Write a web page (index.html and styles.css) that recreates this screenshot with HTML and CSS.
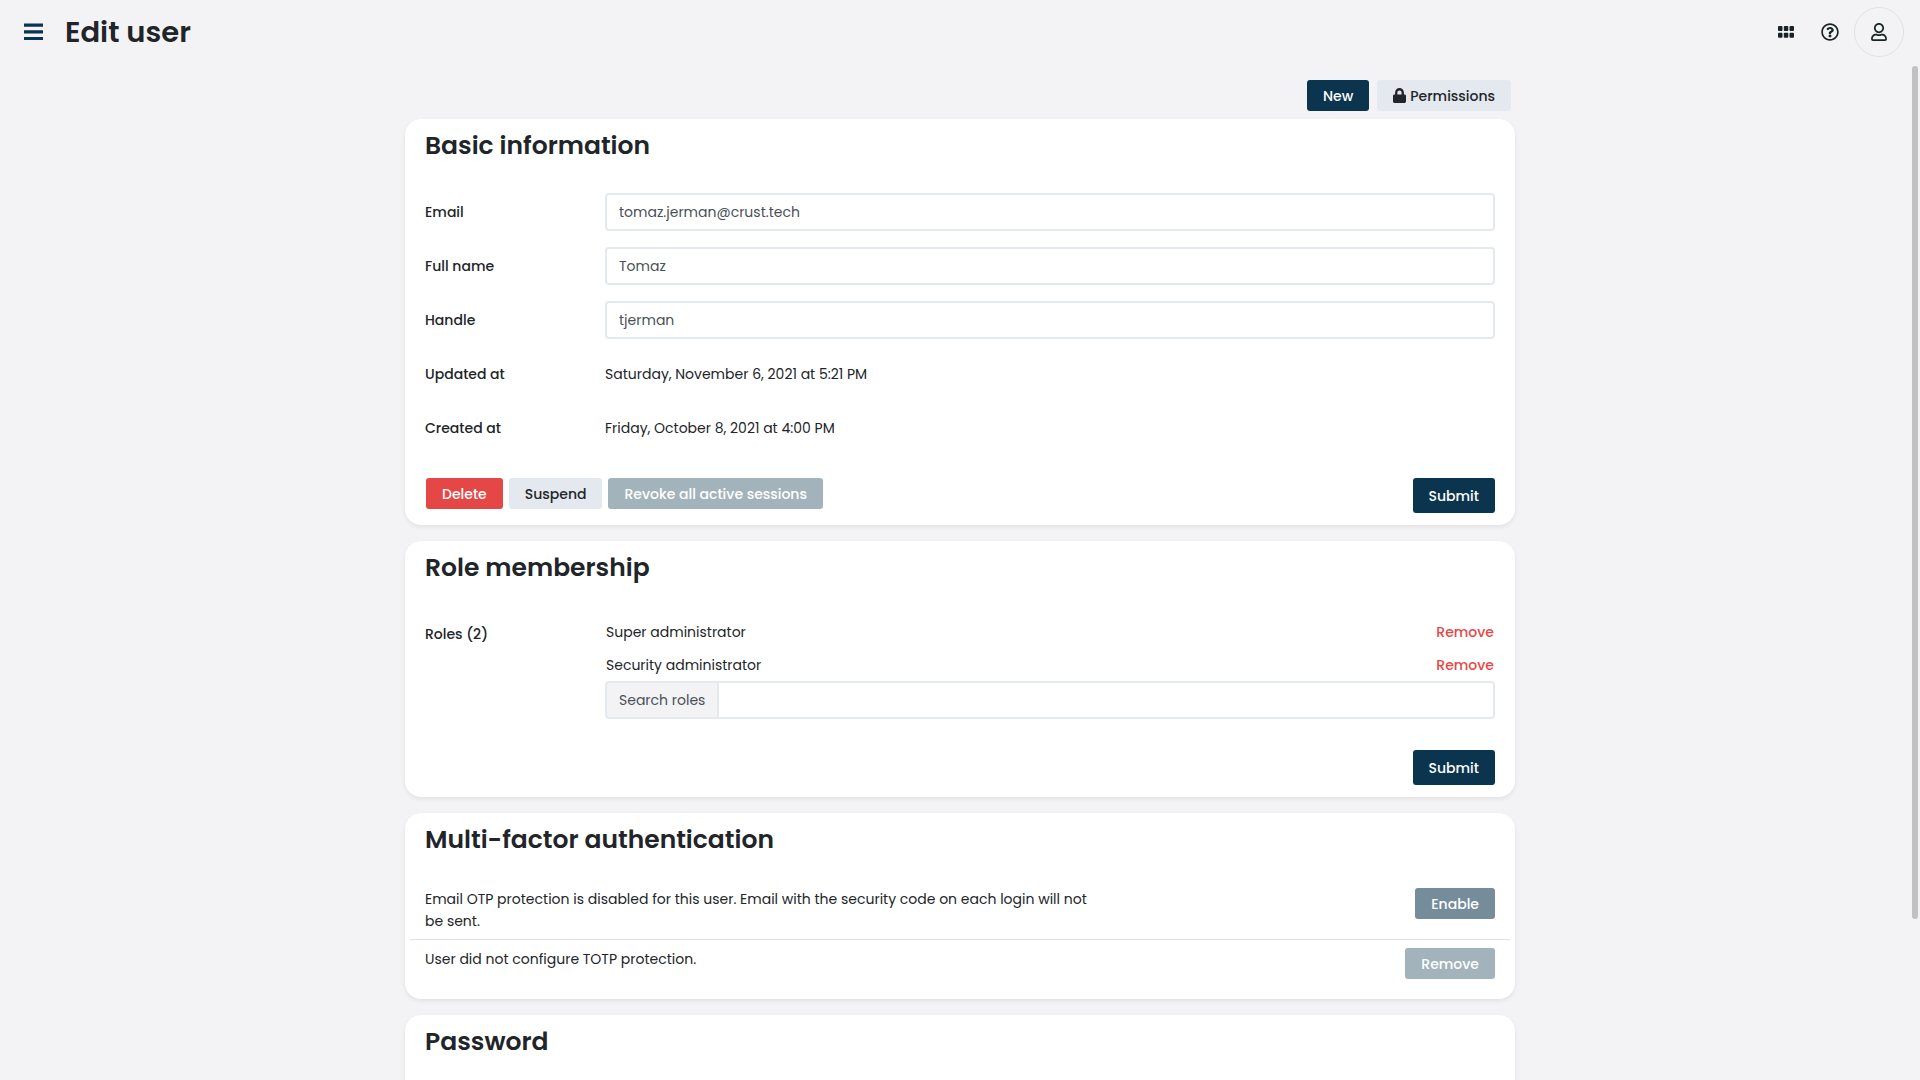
FILE: index.html
```html
<!DOCTYPE html>
<html lang="en">
<head>
<meta charset="utf-8">
<meta name="viewport" content="width=device-width, initial-scale=1">
<title>Edit user</title>
<link rel="stylesheet" href="styles.css">
</head>
<body>
<header class="topbar">
  <button class="icon-button" type="button" aria-label="Menu">
    <svg class="icon-menu" viewBox="0 0 19 18" aria-hidden="true"><path d="M0 .5h19v3.2H0zM0 7.2h19v3.2H0zM0 14h19v3H0z"/></svg>
  </button>
  <h1 class="page-title">Edit user</h1>
  <nav class="tools" aria-label="Tools">
    <button class="icon-button" type="button" aria-label="Applications">
      <svg class="icon-apps" viewBox="0 0 16 12" aria-hidden="true"><rect width="4.5" height="5" rx="1"/><rect x="5.8" width="4.5" height="5" rx="1"/><rect x="11.5" width="4.5" height="5" rx="1"/><rect y="6.8" width="4.5" height="5" rx="1"/><rect x="5.8" y="6.8" width="4.5" height="5" rx="1"/><rect x="11.5" y="6.8" width="4.5" height="5" rx="1"/></svg>
    </button>
    <button class="icon-button" type="button" aria-label="Help">
      <svg class="icon-help" viewBox="0 0 512 512" aria-hidden="true"><path d="M256 8C119.043 8 8 119.083 8 256c0 136.997 111.043 248 248 248s248-111.003 248-248C504 119.083 392.957 8 256 8zm0 448c-110.532 0-200-89.431-200-200 0-110.495 89.472-200 200-200 110.491 0 200 89.471 200 200 0 110.53-89.431 200-200 200zm107.244-255.2c0 67.052-72.421 68.084-72.421 92.863V300c0 6.627-5.373 12-12 12h-45.647c-6.627 0-12-5.373-12-12v-8.659c0-35.745 27.1-50.034 47.579-61.516 17.561-9.845 28.324-16.541 28.324-29.579 0-17.246-21.999-28.693-39.784-28.693-23.189 0-33.894 10.977-48.942 29.969-4.057 5.12-11.46 6.071-16.666 2.124l-27.824-21.098c-5.107-3.872-6.251-11.066-2.644-16.363C184.846 131.491 214.94 112 261.794 112c49.071 0 101.45 38.304 101.45 88.8zM298 368c0 23.159-18.841 42-42 42s-42-18.841-42-42 18.841-42 42-42 42 18.841 42 42z"/></svg>
    </button>
    <button class="icon-button avatar" type="button" aria-label="Profile">
      <svg class="icon-user" viewBox="0 0 448 512" aria-hidden="true"><path d="M313.6 304c-28.7 0-42.5 16-89.6 16-47.1 0-60.8-16-89.6-16C60.2 304 0 364.2 0 438.4V464c0 26.5 21.5 48 48 48h352c26.5 0 48-21.5 48-48v-25.6c0-74.2-60.2-134.4-134.4-134.4zM400 464H48v-25.6c0-47.6 38.8-86.4 86.4-86.4 14.6 0 38.3 16 89.6 16 51.7 0 74.9-16 89.6-16 47.6 0 86.4 38.8 86.4 86.4V464zM224 288c79.5 0 144-64.5 144-144S303.5 0 224 0 80 64.5 80 144s64.5 144 144 144zm0-240c52.9 0 96 43.1 96 96s-43.1 96-96 96-96-43.1-96-96 43.1-96 96-96z"/></svg>
    </button>
  </nav>
</header>
<main class="content">
  <div class="container">
    <div class="actions">
      <button class="btn primary" type="button">New</button>
      <button class="btn light" type="button"><svg class="icon-lock" viewBox="0 0 448 512" aria-hidden="true"><path d="M400 224h-24v-72C376 68.2 307.8 0 224 0S72 68.2 72 152v72H48c-26.5 0-48 21.5-48 48v192c0 26.5 21.5 48 48 48h352c26.5 0 48-21.5 48-48V272c0-26.5-21.5-48-48-48zm-104 0H152v-72c0-39.7 32.3-72 72-72s72 32.3 72 72v72z"/></svg>Permissions</button>
    </div>

    <section class="card">
      <h2 class="card-title">Basic information</h2>
      <form class="fields">
        <div class="field"><label class="label" for="email">Email</label><input class="input" id="email" type="email" value="tomaz.jerman@crust.tech"></div>
        <div class="field"><label class="label" for="name">Full name</label><input class="input" id="name" type="text" value="Tomaz"></div>
        <div class="field"><label class="label" for="handle">Handle</label><input class="input" id="handle" type="text" value="tjerman"></div>
        <div class="field"><span class="label">Updated at</span><span>Saturday, November 6, 2021 at 5:21 PM</span></div>
        <div class="field"><span class="label">Created at</span><span>Friday, October 8, 2021 at 4:00 PM</span></div>
      </form>
      <div class="card-footer">
        <div class="button-group">
          <button class="btn danger" type="button">Delete</button>
          <button class="btn light" type="button">Suspend</button>
          <button class="btn secondary" type="button" disabled>Revoke all active sessions</button>
        </div>
        <button class="btn primary submit" type="button">Submit</button>
      </div>
    </section>

    <section class="card">
      <h2 class="card-title">Role membership</h2>
      <div class="field roles">
        <label class="label" for="roles">Roles (2)</label>
        <div>
          <ul class="role-list">
            <li class="role"><span>Super administrator</span><button class="remove" type="button">Remove</button></li>
            <li class="role"><span>Security administrator</span><button class="remove" type="button">Remove</button></li>
          </ul>
          <div class="search"><span class="search-label">Search roles</span><input class="input search-input" id="roles" type="text"></div>
        </div>
      </div>
      <div class="card-footer">
        <button class="btn primary submit" type="button">Submit</button>
      </div>
    </section>

    <section class="card mfa">
      <h2 class="card-title">Multi-factor authentication</h2>
      <div class="mfa-row">
        <p class="mfa-text">Email OTP protection is disabled for this user. Email with the security code on each login will not be sent.</p>
        <button class="btn secondary" type="button">Enable</button>
      </div>
      <div class="mfa-row">
        <p class="mfa-text">User did not configure TOTP protection.</p>
        <button class="btn secondary" type="button" disabled>Remove</button>
      </div>
    </section>

    <section class="card">
      <h2 class="card-title">Password</h2>
      <form class="fields">
        <input class="input" type="password" aria-label="Password">
      </form>
    </section>
  </div>
</main>
<div class="scroll-thumb" aria-hidden="true"></div>
</body>
</html>
```
FILE: styles.css
```css
* { box-sizing: border-box; }

body {
  margin: 0;
  height: 100vh;
  display: flex;
  flex-direction: column;
  overflow: hidden;
  position: relative;
  background: #f3f3f5;
  color: #212529;
  font: 400 14px/22px Poppins, Inter, "Open Sans", sans-serif;
}

button, input { font: inherit; color: inherit; }
button { cursor: pointer; }

.topbar {
  flex: none;
  display: flex;
  align-items: center;
  height: 64px;
  padding: 0 16px 0 24px;
}

.page-title { margin: 0 0 0 22px; font-size: 29px; line-height: 40px; font-weight: 600; }
.tools { display: flex; align-items: center; gap: 27px; margin-left: auto; }

.icon-button {
  display: flex;
  align-items: center;
  justify-content: center;
  padding: 0;
  border: 0;
  background: none;
}

.icon-button svg { fill: #162425; }
.icon-button .icon-menu { width: 19px; height: 18px; fill: #0b344e; }
.icon-apps { width: 16px; height: 12px; }
.icon-help { width: 18px; height: 18px; }
.icon-user { width: 16px; height: 18px; }
.avatar { width: 50px; height: 50px; margin-left: -12px; border: 1px solid #dee2e6; border-radius: 50%; }

.content { flex: 1; min-height: 0; overflow: hidden; }
.container { max-width: 1140px; margin: 0 auto; padding: 16px 15px; }
.actions { display: flex; justify-content: flex-end; gap: 8px; padding: 0 4px 8px; }

.btn {
  flex: none;
  height: 31px;
  padding: 0 16px;
  border: 0;
  border-radius: 3px;
  font-weight: 500;
  white-space: nowrap;
}

.primary { background: #0b344e; color: #fff; }
.light { background: #e4e9ef; }
.danger { background: #e54747; color: #fff; }
.secondary { background: #758d9b; color: #fff; }
.secondary:disabled { background: #a3b3bb; cursor: default; }
.submit { height: 35px; }
.icon-lock { width: 13px; height: 15px; margin-right: 4px; vertical-align: -2px; fill: currentColor; }

.card {
  margin-bottom: 16px;
  padding: 9px 20px 12px;
  border-radius: 16px;
  background: #fff;
  box-shadow: 0 2px 4px rgba(0, 0, 0, .075);
}

.card-title { margin: 0 0 29px; font-size: 25px; line-height: 36px; font-weight: 600; }
.fields { display: grid; gap: 16px; }
.field { display: grid; grid-template-columns: 180px 1fr; align-items: center; min-height: 38px; }
.label { font-weight: 500; }

.input {
  width: 100%;
  height: 38px;
  padding: 0 12px;
  border: 2px solid #e4e9ef;
  border-radius: 4px;
  background: #fff;
  color: #495057;
}

.card-footer { display: flex; justify-content: flex-end; align-items: flex-start; padding-top: 31px; }
.button-group { display: flex; gap: 6px; margin-right: auto; padding-left: 1px; }

.roles { align-items: start; }
.roles .label { padding-top: 8px; }
.role-list { margin: 0; padding: 0 1px; list-style: none; }
.role { display: flex; justify-content: space-between; align-items: center; height: 33px; }
.remove { padding: 0; border: 0; background: none; color: #e54747; font-weight: 500; }
.search { display: flex; }

.search-label {
  flex: none;
  padding: 6px 12px;
  border: 2px solid #e4e9ef;
  border-right: 0;
  border-radius: 4px 0 0 4px;
  background: #f3f3f5;
  color: #495057;
}

.search-input { border-radius: 0 4px 4px 0; }

.mfa { padding: 9px 5px 13px; }
.mfa .card-title { margin: 0 15px 22px; }
.mfa-row { display: flex; justify-content: space-between; align-items: flex-start; padding: 8px 15px 7px; }
.mfa-row + .mfa-row { border-top: 1px solid #dee2e6; }
.mfa-text { margin: 0; max-width: 675px; }

.scroll-thumb {
  position: absolute;
  top: 66px;
  right: 2px;
  width: 6px;
  height: 79%;
  border-radius: 3px;
  background: #c1c1c1;
}
```
